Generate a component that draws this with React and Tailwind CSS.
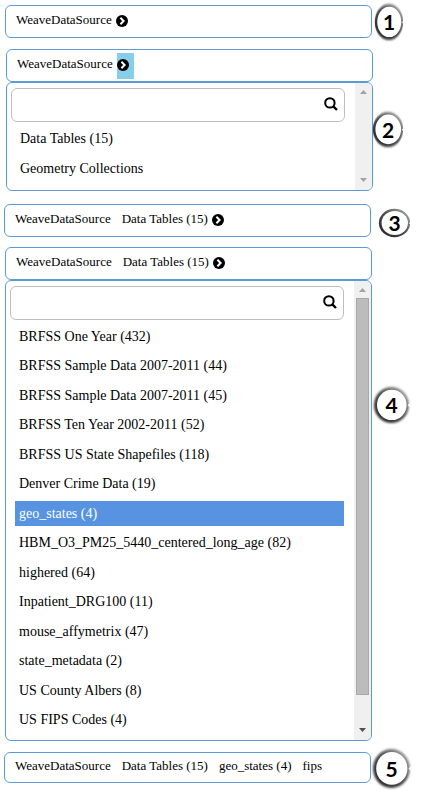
import React from "react";

const tables = [
  "BRFSS One Year (432)",
  "BRFSS Sample Data 2007-2011 (44)",
  "BRFSS Sample Data 2007-2011 (45)",
  "BRFSS Ten Year 2002-2011 (52)",
  "BRFSS US State Shapefiles (118)",
  "Denver Crime Data (19)",
  "geo_states (4)",
  "HBM_O3_PM25_5440_centered_long_age (82)",
  "highered (64)",
  "Inpatient_DRG100 (11)",
  "mouse_affymetrix (47)",
  "state_metadata (2)",
  "US County Albers (8)",
  "US FIPS Codes (4)",
];

function ChevronCircle() {
  return (
    <svg width="12" height="12" viewBox="0 0 12 12" fill="none" aria-hidden="true">
      <circle cx="6" cy="6" r="6" fill="#000" />
      <path d="M4.4 2.8L7.6 6L4.4 9.2" stroke="#fff" strokeWidth="2" />
    </svg>
  );
}

function Bar({ items, arrow, active, height = "h-[33px]" }) {
  return (
    <nav
      className={`flex items-center rounded-md border border-[#5b9bd5] bg-white pl-[10px] text-[13px] leading-4 ${height}`}
    >
      <div className="flex gap-[11px] pb-[3px]">
        {items.map((t) => (
          <button key={t} type="button" className="whitespace-nowrap">
            {t}
          </button>
        ))}
      </div>
      {arrow && (
        <button
          type="button"
          aria-label="Expand"
          className={`ml-1 flex h-[26px] w-[17px] items-center pb-px ${active ? "bg-[#87ceeb]" : ""}`}
        >
          <ChevronCircle />
        </button>
      )}
    </nav>
  );
}

function Arrow({ down, color }) {
  return (
    <svg width="7" height="4" viewBox="0 0 7 4" className="shrink-0" fill={color}>
      <path d={down ? "M0 0H7L3.5 4Z" : "M0 4H7L3.5 0Z"} />
    </svg>
  );
}

function ScrollBar({ thumb }) {
  return (
    <div className="flex w-[17px] shrink-0 flex-col items-center rounded-r-sm bg-[#f0f0f0] pt-[7px] pb-2">
      <Arrow color="#a3a3a3" />
      <div className="mt-[6px] mb-[33px] flex w-full grow pl-[2px]">
        {thumb && <div className="w-[13px] border border-[#a8a8a8] bg-[#bcbcbc]" />}
      </div>
      <Arrow down color={thumb ? "#505050" : "#a3a3a3"} />
    </div>
  );
}

function Panel({ items, selected, thumb, height, listClass }) {
  return (
    <div className={`flex overflow-hidden rounded-md border border-[#5b9bd5] bg-white ${height}`}>
      <div className="min-w-0 grow pt-[5px] pr-[10px] pl-1">
        <label className="flex h-[34px] items-center rounded-md border border-[#bebebe] pr-[6px]">
          <input type="text" aria-label="Search" className="h-full min-w-0 grow px-2 text-sm outline-none" />
          <svg width="14" height="14" viewBox="0 0 14 14" fill="none" stroke="#000" className="-mt-[3px]">
            <circle cx="5.9" cy="5.9" r="4.7" strokeWidth="2" />
            <path d="M9.3 9.3L13 13" strokeWidth="2.4" />
          </svg>
        </label>
        <ul className={`mt-1 flex flex-col pl-[5px] text-sm leading-4 ${listClass}`}>
          {items.map((t, i) => (
            <li key={i} className="flex">
              <button
                type="button"
                className={`h-[25px] grow pl-1 text-left whitespace-nowrap ${
                  t === selected ? "bg-[#5793e0] text-white" : ""
                }`}
              >
                {t}
              </button>
            </li>
          ))}
        </ul>
      </div>
      <ScrollBar thumb={thumb} />
    </div>
  );
}

function Badge({ n, size }) {
  const id = `ring${n}`;
  return (
    <div className={`relative flex shrink-0 items-center justify-center ${size}`}>
      <svg
        className="absolute inset-0 h-full w-full overflow-visible"
        viewBox="0 0 38 38"
        preserveAspectRatio="none"
        fill="none"
        aria-hidden="true"
      >
        <defs>
          <linearGradient id={id} x1="0.1" y1="0.8" x2="0.8" y2="0.1">
            <stop offset="0" stopColor="#2c2c2c" />
            <stop offset="0.5" stopColor="#4c4c4c" />
            <stop offset="1" stopColor="#949494" />
          </linearGradient>
          <filter id={`${id}s`} x="-10%" y="-10%" width="120%" height="120%">
            <feGaussianBlur stdDeviation="0.9" />
          </filter>
        </defs>
        <circle cx="19" cy="19" r="18" fill={`url(#${id})`} filter={`url(#${id}s)`} />
        <path d="M38.5 16.5L35.5 19.2L38.5 21.5Z" fill="#fff" />
        <circle cx="19.3" cy="18.9" r="15.2" fill="#fff" />
      </svg>
      <span className="relative font-[Lato,sans-serif] text-[21px] leading-6 font-bold">{n}</span>
    </div>
  );
}

function Step({ n, className, columnClass, badgeSize, children }) {
  return (
    <section className={`flex items-start ${className}`}>
      <div className="min-w-0 grow">{children}</div>
      <div className={`shrink-0 ${columnClass}`}>
        <Badge n={n} size={badgeSize} />
      </div>
    </section>
  );
}

export default function App() {
  return (
    <main className="bg-white pt-[5px] pb-5 font-['Liberation_Serif',serif] text-black">
      <Step n={1} className="pl-[5px]" columnClass="-mt-[2px] w-[73px] pl-[2px]" badgeSize="h-[38px] w-[30px]">
        <Bar items={["WeaveDataSource"]} arrow />
      </Step>
      <Step n={2} className="mt-2 pl-[6px]" columnClass="-ml-px mt-[62px] w-[73px]" badgeSize="h-[37px] w-8">
        <Bar items={["WeaveDataSource"]} arrow active />
        <Panel
          items={["Data Tables (15)", "Geometry Collections"]}
          height="h-[109px]"
          listClass="gap-[5px]"
        />
      </Step>
      <Step n={3} className="mt-[13px] pl-1" columnClass="mt-1 w-[74px] pl-[7px]" badgeSize="h-[30px] w-[33px]">
        <Bar items={["WeaveDataSource", "Data Tables (15)"]} arrow />
      </Step>
      <Step n={4} className="mt-[9px] pl-[5px]" columnClass="mt-[139px] w-[73px] pl-px" badgeSize="h-[38px] w-[37px]">
        <Bar items={["WeaveDataSource", "Data Tables (15)"]} arrow />
        <Panel
          items={tables}
          selected="geo_states (4)"
          thumb
          height="h-[461px]"
          listClass="h-[409px] justify-between"
        />
      </Step>
      <Step n={5} className="mt-[11px] pl-1" columnClass="-mt-1 w-[74px] pl-px" badgeSize="h-[41px] w-[39px]">
        <Bar
          items={["WeaveDataSource", "Data Tables (15)", "geo_states (4)", "fips"]}
          height="h-[31px]"
        />
      </Step>
    </main>
  );
}
